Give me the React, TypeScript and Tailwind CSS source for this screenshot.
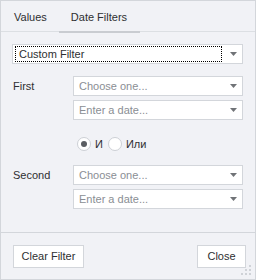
import React from "react";

const Arrow = () => (
  <svg width="7" height="4" viewBox="0 0 7 4" className="shrink-0">
    <polygon points="0,0 7,0 3.5,4" fill="#707377" />
  </svg>
);

const Combo = ({ text }: { text: string }) => (
  <div className="h-[20px] w-[170px] bg-white border border-[#d3d6db] flex items-center pl-[5px] pr-[5px]">
    <span className="flex-1 text-[#8a8e94] leading-none">{text}</span>
    <Arrow />
  </div>
);

const Radio = ({ checked, label }: { checked?: boolean; label: string }) => (
  <div className="flex items-center gap-[4px]">
    <div className="w-[14px] h-[14px] rounded-full bg-white border border-[#cdd0d5] flex items-center justify-center">
      {checked && <div className="w-[6px] h-[6px] rounded-full bg-[#5a5d62]" />}
    </div>
    <span>{label}</span>
  </div>
);

export default function App() {
  return (
    <div
      className="relative w-[256px] h-[280px] border border-[#d3d6db] bg-[#f1f2f6] flex flex-col text-[11px] text-[#2e2f31]"
      style={{ fontFamily: '"Liberation Sans", Arial, sans-serif' }}
    >
      <div className="h-[31px] shrink-0 border-b border-[#dcdfe3] flex">
        <div className="pl-[13px] pr-[12px] flex items-center pt-[2px]">Values</div>
        <div className="relative pl-[12px] pr-[13px] flex items-center pt-[2px]">
          Date Filters
          <span className="absolute left-0 right-0 bottom-[-2px] h-[2px] bg-[#c9ccd1]" />
        </div>
      </div>

      <div className="flex-1 flex flex-col pl-[11px] pr-[12px]">
        <div className="mt-[12px] h-[20px] bg-white border border-[#d3d6db] flex items-center pl-[2px] pr-[5px]">
          <div className="flex-1 h-[16px] border border-dotted border-black flex items-center pl-[3px] mr-[8px]">
            Custom Filter
          </div>
          <Arrow />
        </div>

        <div className="mt-[12px] flex">
          <div className="w-[61px] pl-[1px] pt-[2px]">First</div>
          <div className="flex flex-col gap-[4px]">
            <Combo text="Choose one..." />
            <Combo text="Enter a date..." />
          </div>
        </div>

        <div className="mt-[17px] h-[14px] flex items-center gap-[5px] pl-[65px]">
          <Radio checked label="И" />
          <Radio label="Или" />
        </div>

        <div className="mt-[14px] flex">
          <div className="w-[61px] pl-[1px] pt-[2px]">Second</div>
          <div className="flex flex-col gap-[4px]">
            <Combo text="Choose one..." />
            <Combo text="Enter a date..." />
          </div>
        </div>
      </div>

      <div className="h-[47px] shrink-0 border-t border-[#d3d6db] flex items-start justify-between pt-[12px] pl-[12px] pr-[9px]">
        <button className="h-[23px] w-[71px] bg-white border border-[#d3d6db] flex items-center justify-center">
          Clear Filter
        </button>
        <button className="h-[23px] w-[49px] bg-white border border-[#d3d6db] flex items-center justify-center">
          Close
        </button>
      </div>

      <div className="absolute right-[4px] bottom-[4px] w-[10px] h-[10px]">
        <span className="absolute right-0 top-0 w-[2px] h-[2px] bg-[#cfd2d7]" />
        <span className="absolute right-0 top-[4px] w-[2px] h-[2px] bg-[#cfd2d7]" />
        <span className="absolute right-[4px] top-[4px] w-[2px] h-[2px] bg-[#cfd2d7]" />
        <span className="absolute right-0 top-[8px] w-[2px] h-[2px] bg-[#cfd2d7]" />
        <span className="absolute right-[4px] top-[8px] w-[2px] h-[2px] bg-[#cfd2d7]" />
        <span className="absolute right-[8px] top-[8px] w-[2px] h-[2px] bg-[#cfd2d7]" />
      </div>
    </div>
  );
}
